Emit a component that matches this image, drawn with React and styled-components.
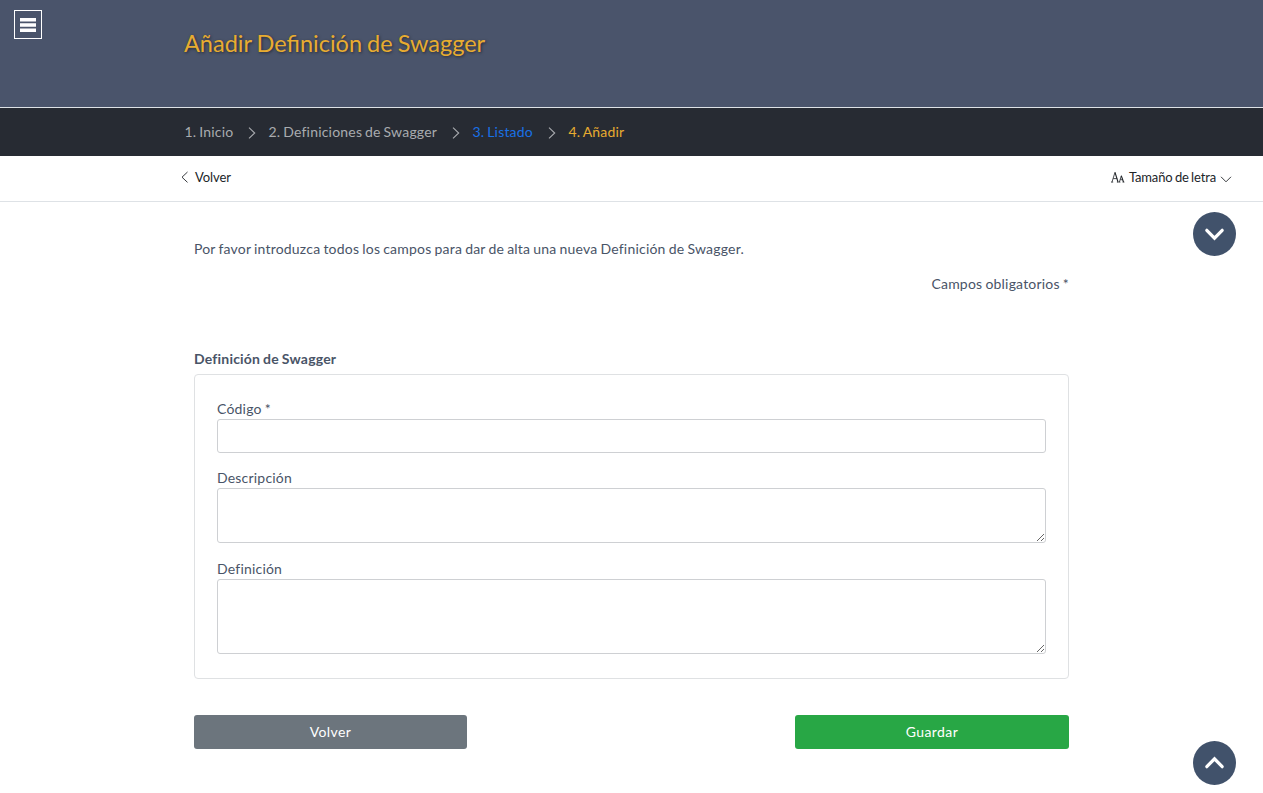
import React from 'react';
import styled, { createGlobalStyle } from 'styled-components';

const GlobalStyle = createGlobalStyle`
  *, *::before, *::after { box-sizing: border-box; }
  body {
    margin: 0;
    min-height: 793px;
    overflow: hidden;
    background: #fff;
    color: #495467;
    font: 14px/20px Lato, sans-serif;
    letter-spacing: 0.2px;
    word-spacing: -0.7px;
  }
`;

const Header = styled.header`
  display: flex;
  align-items: flex-start;
  height: 108px;
  background: #4a546b;
  border-bottom: 1px solid #dee2e6;
`;

const MenuButton = styled.button`
  display: flex;
  align-items: center;
  justify-content: center;
  width: 28px;
  height: 29px;
  margin: 10px 0 0 14px;
  padding: 0;
  background: transparent;
  border: 1px solid #fff;
  color: #fff;
`;

const Title = styled.h1`
  margin: 28px 0 0 142px;
  font-size: 23.5px;
  line-height: 30px;
  font-weight: 400;
  letter-spacing: 0;
  word-spacing: -1px;
  color: #e8ac30;
  text-shadow: 1px 1px 3px rgba(0, 0, 0, 0.5);
`;

const Breadcrumb = styled.nav`
  display: flex;
  align-items: center;
  height: 48px;
  padding-left: 184.5px;
  background: #272b33;
`;

const Crumb = styled.a`
  width: ${(p) => p.$width};
  white-space: nowrap;
  word-spacing: -0.9px;
  color: ${(p) => p.$color || '#a9abaf'};
`;

const CrumbArrow = styled.svg`
  width: 8px;
  height: 12px;
  margin: 1px 12.2px 0 15.8px;
`;

const Toolbar = styled.div`
  display: flex;
  align-items: center;
  justify-content: space-between;
  height: 46px;
  padding: 0 31px 3px 180px;
  border-bottom: 1px solid #dee2e6;
`;

const ToolLink = styled.a`
  display: flex;
  align-items: center;
  font-size: 13px;
  letter-spacing: ${(p) => p.$tracking || '-0.1px'};
  word-spacing: -0.8px;
  color: #212529;
`;

const BackArrow = styled.svg`
  width: 9px;
  height: 12px;
  margin-right: 6px;
`;

const LetterIcon = styled.svg`
  width: 14px;
  height: 12px;
  margin-right: 4px;
`;

const DownArrow = styled.svg`
  width: 12px;
  height: 8px;
  margin: 4px 0 0 4px;
`;

const Content = styled.main`
  display: flex;
  flex-direction: column;
  width: 875px;
  margin-left: 194px;
  padding-top: 37px;
`;

const Intro = styled.p`
  margin: 0;
`;

const Required = styled.p`
  margin: 15px 0 55px;
  text-align: right;
`;

const SectionTitle = styled.h2`
  margin: 0 0 5px;
  font-size: 14px;
  line-height: 20px;
  font-weight: 700;
`;

const Panel = styled.section`
  display: flex;
  flex-direction: column;
  height: 305px;
  padding: 24px 22px;
  border: 1px solid #dfe1e3;
  border-radius: 4px;
`;

const Field = styled.label`
  display: flex;
  flex-direction: column;
  margin-bottom: ${(p) => p.$gap || '15px'};
`;

const Input = styled.input`
  height: 34px;
  border: 1px solid #ced0d3;
  border-radius: 3px;
  background: #fff;
`;

const TextArea = styled.textarea`
  height: ${(p) => p.$height};
  margin: 0;
  border: 1px solid #ced0d3;
  border-radius: 3px;
  background: #fff;
  resize: vertical;
`;

const Actions = styled.div`
  display: flex;
  justify-content: space-between;
  margin-top: 36px;
`;

const ActionButton = styled.button`
  width: ${(p) => p.$width};
  height: 34px;
  padding: 0;
  border: 0;
  border-radius: 3px;
  background: ${(p) => p.$color};
  color: #fff;
  font: 14px/20px Lato, sans-serif;
  letter-spacing: 0.4px;
`;

const ScrollButton = styled.button`
  position: fixed;
  right: 27px;
  ${(p) => (p.$up ? 'top: 741px;' : 'top: 212px;')}
  display: flex;
  align-items: center;
  justify-content: center;
  width: 43px;
  height: 44px;
  padding: 0;
  border: 0;
  border-radius: 50%;
  background: #41526b;
`;

function Separator() {
  return (
    <CrumbArrow viewBox="0 0 8 12" fill="none" stroke="#a9abaf" strokeWidth="1.1">
      <path d="M1 .7 6.7 6 1 11.3" />
    </CrumbArrow>
  );
}

function ScrollTo({ up }) {
  return (
    <ScrollButton $up={up} type="button" aria-label={up ? 'Subir' : 'Bajar'}>
      <svg width="21" height="14" viewBox="0 0 21 14" fill="none" stroke="#fff" strokeWidth="3.2" strokeLinecap="round">
        <path d={up ? 'M2.8 10.7 10.5 2.8 18.2 10.7' : 'M2.8 3.3 10.5 11.2 18.2 3.3'} />
      </svg>
    </ScrollButton>
  );
}

export default function App() {
  return (
    <>
      <GlobalStyle />
      <Header>
        <MenuButton type="button" aria-label="Menú">
          <svg width="16" height="14" viewBox="0 0 16 14" fill="currentColor">
            <path d="M0 0h16v3.6H0zM0 5.2h16v3.6H0zM0 10.4h16V14H0z" />
          </svg>
        </MenuButton>
        <Title>Añadir Definición de Swagger</Title>
      </Header>
      <Breadcrumb>
        <Crumb $width="48px">1. Inicio</Crumb>
        <Separator />
        <Crumb $width="168px">2. Definiciones de Swagger</Crumb>
        <Separator />
        <Crumb $width="60px" $color="#1971e6">3. Listado</Crumb>
        <Separator />
        <Crumb $width="58px" $color="#e8ac30">4. Añadir</Crumb>
      </Breadcrumb>
      <Toolbar>
        <ToolLink>
          <BackArrow viewBox="0 0 9 12" fill="none" stroke="currentColor" strokeWidth="0.9">
            <path d="M7.5 1 2 6.2 7.5 11.4" />
          </BackArrow>
          Volver
        </ToolLink>
        <ToolLink $tracking="-0.15px">
          <LetterIcon viewBox="0 0 14 12" fill="none" stroke="currentColor">
            <path strokeWidth=".8" d="M1 11 4 1.3M2.2 7.6h4M0 11.1h2.2M5.9 11.1h1.8M8.4 11 10.3 4.8M9.1 8.7h2.7M7.8 11.1h1.6M11.6 11.1h1.8" />
            <path strokeWidth="1.1" d="M4 1.3 7 11M10.3 4.8 12.5 11" />
          </LetterIcon>
          Tamaño de letra
          <DownArrow viewBox="0 0 12 8" fill="none" stroke="currentColor" strokeWidth="0.9">
            <path d="M1 1.8 6 6.8 11 1.8" />
          </DownArrow>
        </ToolLink>
      </Toolbar>
      <Content>
        <Intro>Por favor introduzca todos los campos para dar de alta una nueva Definición de Swagger.</Intro>
        <Required>Campos obligatorios *</Required>
        <SectionTitle>Definición de Swagger</SectionTitle>
        <Panel>
          <Field>
            Código *
            <Input />
          </Field>
          <Field $gap="16px">
            Descripción
            <TextArea $height="55px" />
          </Field>
          <Field $gap="0">
            Definición
            <TextArea $height="75px" />
          </Field>
        </Panel>
        <Actions>
          <ActionButton type="button" $width="273px" $color="#6c757d">Volver</ActionButton>
          <ActionButton type="button" $width="274px" $color="#28a745">Guardar</ActionButton>
        </Actions>
      </Content>
      <ScrollTo />
      <ScrollTo up />
    </>
  );
}
